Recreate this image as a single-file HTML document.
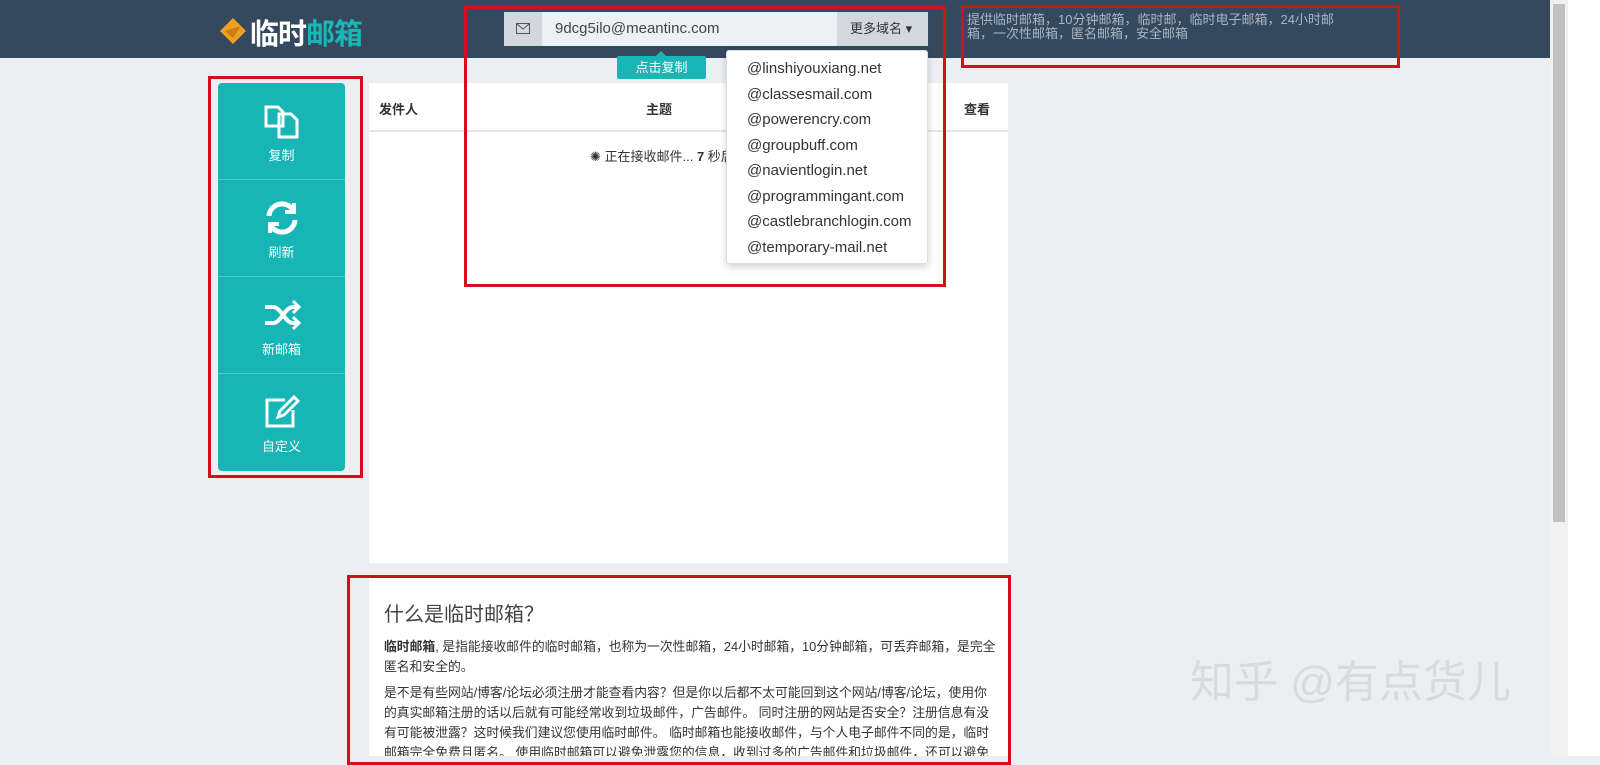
<!DOCTYPE html><html><head><meta charset="utf-8"><style>
*{box-sizing:border-box;margin:0;padding:0}
body{width:1600px;height:756px;overflow:hidden;background:#eceff2;font-family:"Liberation Sans","Noto Sans CJK SC",sans-serif;position:relative;color:#333}
.hdr{position:absolute;left:0;top:0;width:1550px;height:58px;background:#34495e}
.abs{position:absolute}
.red{position:absolute;border:3px solid #d0101a}
.side{position:absolute;left:218px;top:83px;width:127px;height:388px;background:#17b5b5;border-radius:4px}
.cell{height:97px;border-bottom:1px solid #4fcaca;color:#fff;text-align:center;font-size:13px;padding-top:20px}
.cell svg{display:block;margin:0 auto 6px}
.panel{position:absolute;background:#fff}
.dd div{height:25.5px;line-height:25.5px;padding-left:20px;font-size:15px;color:#333}
p{font-size:12.8px;line-height:20px;color:#333;margin-bottom:6px}
</style></head><body>
<div class="hdr"></div>
<svg class="abs" style="left:219px;top:16px" width="28" height="30" viewBox="0 0 28 30"><path d="M14 2 L27 15 L14 28 L1 15Z" fill="#f0a020"/><path d="M6 15 L22 10 L14 22Z" fill="#d07a10"/></svg>
<div class="abs" style="left:250px;top:11px;font-size:29px;font-weight:bold;color:#fff;letter-spacing:-1px">临时<span style="color:#1ab5b5">邮箱</span></div>
<div class="abs" style="left:504px;top:12px;width:38px;height:34px;background:#d3d8dc"></div>
<svg class="abs" style="left:516px;top:23px" width="14" height="11"><rect x=".5" y=".5" width="13" height="10" fill="none" stroke="#555"/><path d="M1 1 L7 6 L13 1" fill="none" stroke="#555"/></svg>
<div class="abs" style="left:542px;top:12px;width:295px;height:34px;background:#eef1f3;font-size:15px;line-height:34px;padding-left:13px;color:#444">9dcg5ilo@meantinc.com</div>
<div class="abs" style="left:837px;top:12px;width:91px;height:34px;background:#d3d8dc;font-size:13px;line-height:34px;padding-left:13px;color:#333">更多域名 ▾</div>
<div class="abs" style="left:656px;top:51px;width:0;height:0;border:5px solid transparent;border-bottom-color:#1ab5b5;border-top:0"></div>
<div class="abs" style="left:617px;top:56px;width:89px;height:23px;background:#1ab5b5;color:#fff;font-size:13px;line-height:23px;text-align:center;border-radius:2px">点击复制</div>
<div class="abs" style="left:967px;top:13px;width:375px;font-size:13px;line-height:14px;color:#aab5c0">提供临时邮箱，10分钟邮箱，临时邮，临时电子邮箱，24小时邮箱，一次性邮箱，匿名邮箱，安全邮箱</div>
<div class="side">
<div class="cell"><svg width="38" height="36" viewBox="0 0 38 36" fill="none" stroke="#fff" stroke-width="3"><path d="M3 4h12l5 5v14H3z"/><path d="M16 11h12l6 6v17H16z"/></svg>复制</div>
<div class="cell"><svg width="36" height="36" viewBox="0 0 36 36" fill="none" stroke="#fff" stroke-width="5"><path d="M5 16a13 13 0 0 1 24-6"/><path d="M31 20a13 13 0 0 1-24 6"/><path d="M30 3v9h-9M6 33v-9h9" stroke-width="4"/></svg>刷新</div>
<div class="cell"><svg width="38" height="36" viewBox="0 0 38 36" fill="none" stroke="#fff" stroke-width="4"><path d="M2 10h8c8 0 12 16 20 16h4M2 26h8c8 0 12-16 20-16h4"/><path d="M30 4l6 6-6 6M30 20l6 6-6 6" stroke-width="3"/></svg>新邮箱</div>
<div class="cell" style="border:0"><svg width="38" height="36" viewBox="0 0 38 36" fill="none" stroke="#fff" stroke-width="3"><path d="M22 6H4v26h26V16"/><path d="M15 23l2-6L31 3l4 4-14 14z"/></svg>自定义</div>
</div>
<div class="panel" style="left:369px;top:83px;width:639px;height:480px"></div>
<div class="abs" style="left:369px;top:130px;width:639px;height:2px;background:#e5e5e5"></div>
<div class="abs" style="left:379px;top:99px;font-size:13px;font-weight:bold">发件人</div>
<div class="abs" style="left:646px;top:99px;font-size:13px;font-weight:bold">主题</div>
<div class="abs" style="left:964px;top:99px;font-size:13px;font-weight:bold">查看</div>
<div class="abs" style="left:590px;top:146px;font-size:13px">✺ 正在接收邮件... <b>7</b> 秒后自动刷新</div>
<div class="panel dd" style="left:726px;top:50px;width:202px;height:214px;border:1px solid #ddd;border-radius:3px;box-shadow:0 3px 8px rgba(0,0,0,.18);padding-top:5px">
<div>@linshiyouxiang.net</div><div>@classesmail.com</div><div>@powerencry.com</div><div>@groupbuff.com</div><div>@navientlogin.net</div><div>@programmingant.com</div><div>@castlebranchlogin.com</div><div>@temporary-mail.net</div></div>
<div class="panel" style="left:369px;top:578px;width:639px;height:178px;padding:20px 12px 0 15px;overflow:hidden">
<div style="font-size:20px;color:#444;margin-bottom:10px">什么是临时邮箱？</div>
<p><b>临时邮箱</b>, 是指能接收邮件的临时邮箱，也称为一次性邮箱，24小时邮箱，10分钟邮箱，可丢弃邮箱，是完全匿名和安全的。</p>
<p>是不是有些网站/博客/论坛必须注册才能查看内容？但是你以后都不太可能回到这个网站/博客/论坛，使用你的真实邮箱注册的话以后就有可能经常收到垃圾邮件，广告邮件。 同时注册的网站是否安全？注册信息有没有可能被泄露？这时候我们建议您使用临时邮件。 临时邮箱也能接收邮件，与个人电子邮件不同的是，临时邮箱完全免费且匿名。 使用临时邮箱可以避免泄露您的信息，收到过多的广告邮件和垃圾邮件，还可以避免</p>
</div>
<div class="abs" style="left:1190px;top:646px;font-size:44px;color:#d8dadc;white-space:nowrap">知乎 @有点货儿</div>
<div class="abs" style="left:1550px;top:0;width:18px;height:756px;background:#f1f1f1"></div>
<div class="abs" style="left:1553px;top:4px;width:12px;height:518px;background:#c1c1c1"></div>
<div class="abs" style="left:1568px;top:0;width:32px;height:756px;background:#fff"></div>
<div class="red" style="left:208px;top:76px;width:155px;height:402px"></div>
<div class="red" style="left:464px;top:6px;width:482px;height:281px"></div>
<div class="red" style="left:961px;top:5px;width:439px;height:63px"></div>
<div class="red" style="left:347px;top:575px;width:664px;height:190px"></div>
</body></html>
